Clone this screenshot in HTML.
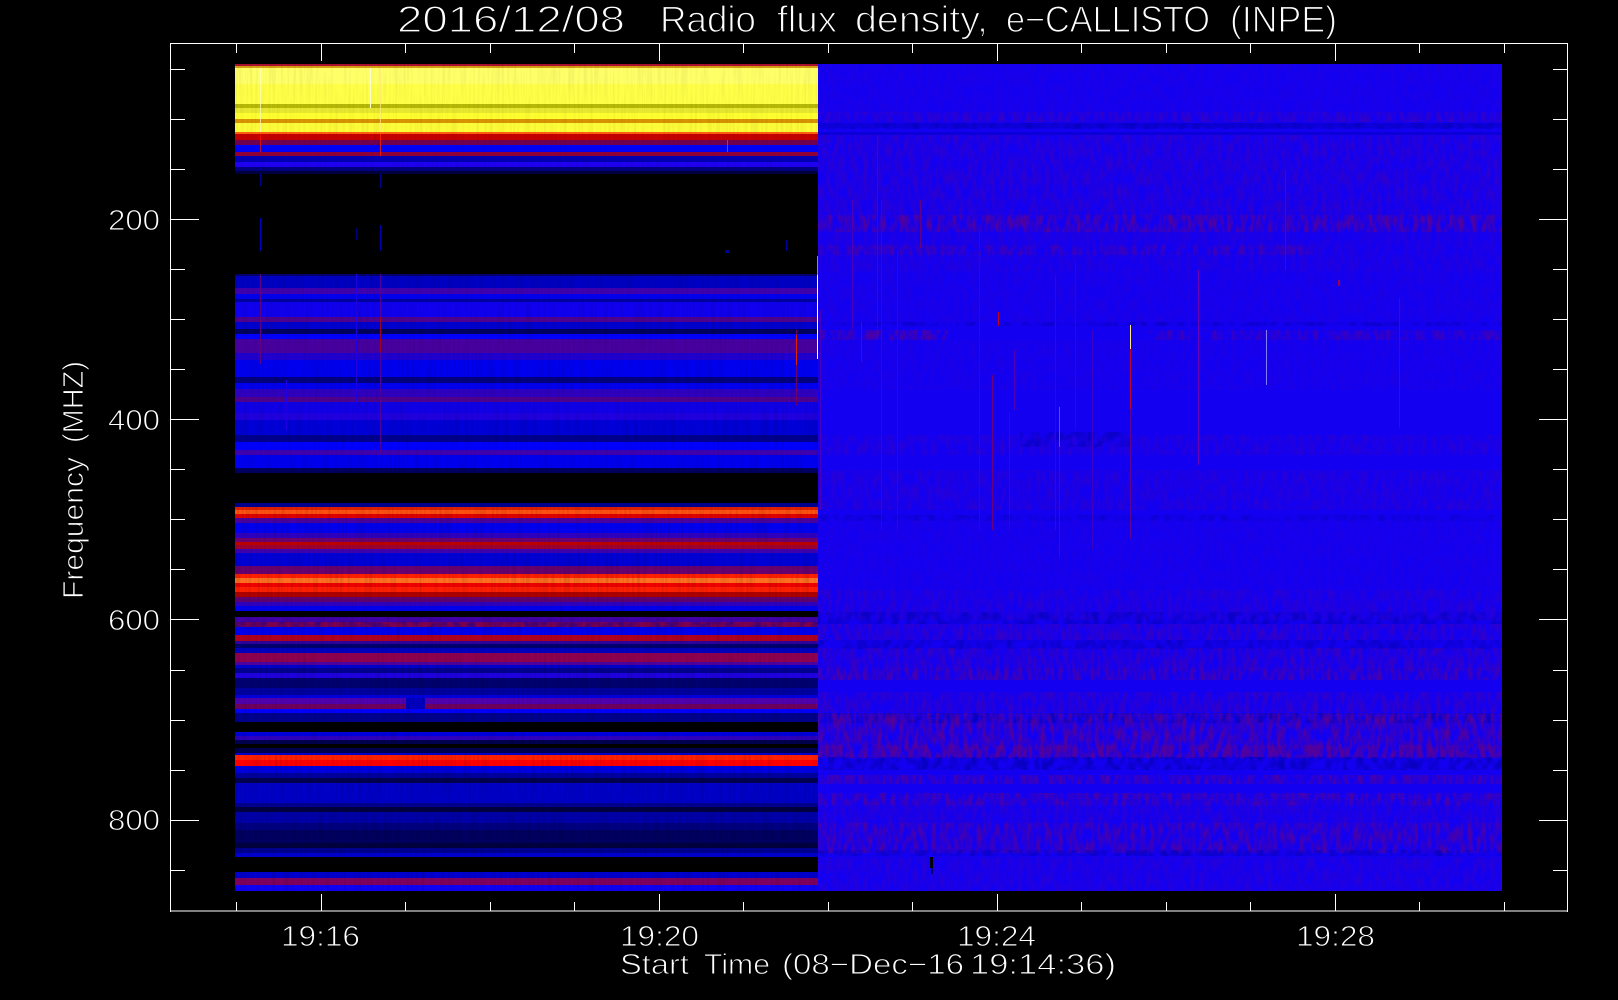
<!DOCTYPE html>
<html><head><meta charset="utf-8"><title>e-CALLISTO</title>
<style>
html,body{margin:0;padding:0;background:#000;width:1618px;height:1000px;overflow:hidden}
svg{display:block}
.b rect,.g rect{shape-rendering:crispEdges}
text{font-family:"Liberation Sans",sans-serif;fill:#fff;stroke:#000;white-space:pre}
.t{font-size:37px;stroke-width:1.2px}
.l{font-size:29px;stroke-width:.9px}
</style></head><body>
<svg xmlns="http://www.w3.org/2000/svg" width="1618" height="1000" viewBox="0 0 1618 1000">
<defs>
<filter id="p" x="0" y="0" width="100%" height="100%" color-interpolation-filters="sRGB">
<feTurbulence type="fractalNoise" baseFrequency=".22 .07" numOctaves="2" seed="4"/>
<feColorMatrix values="0 0 0 0 .5 0 0 0 0 0 0 0 0 0 .38 2.4 0 0 0 -.85"/>
<feComposite in2="SourceAlpha" operator="in"/>
</filter>
<filter id="d" x="0" y="0" width="100%" height="100%" color-interpolation-filters="sRGB">
<feTurbulence type="fractalNoise" baseFrequency=".14 .1" numOctaves="2" seed="9"/>
<feColorMatrix values="0 0 0 0 0 0 0 0 0 0 0 0 0 0 .62 2.6 0 0 0 -.95"/>
<feComposite in2="SourceAlpha" operator="in"/>
</filter>
<filter id="s" x="0" y="0" width="100%" height="100%" color-interpolation-filters="sRGB">
<feTurbulence type="fractalNoise" baseFrequency=".45 .02" numOctaves="2" seed="2"/>
<feColorMatrix values="0 0 0 0 0 0 0 0 0 0 0 0 0 0 0 2.2 0 0 0 -.85"/>
<feComposite in2="SourceAlpha" operator="in"/>
</filter>
</defs>
<rect width="1618" height="1000" fill="#000"/>

<!-- left bands -->
<g class="b">
<rect x="235" y="64" width="583" height="2" fill="#a81030"/>
<rect x="235" y="66" width="583" height="2" fill="#d8a010"/>
<rect x="235" y="68" width="583" height="16" fill="#ffff68"/>
<rect x="235" y="84" width="583" height="20" fill="#ffff48"/>
<rect x="235" y="104" width="583" height="4" fill="#b8b808"/>
<rect x="235" y="108" width="583" height="5" fill="#e8e830"/>
<rect x="235" y="113" width="583" height="6" fill="#ffff30"/>
<rect x="235" y="119" width="583" height="4" fill="#d89400"/>
<rect x="235" y="123" width="583" height="9" fill="#fcfc38"/>
<rect x="235" y="132" width="583" height="2" fill="#ff6010"/>
<rect x="235" y="134" width="583" height="6" fill="#c40000"/>
<rect x="235" y="140" width="583" height="5" fill="#700050"/>
<rect x="235" y="145" width="583" height="7" fill="#0000f8"/>
<rect x="235" y="152" width="583" height="4" fill="#900038"/>
<rect x="235" y="156" width="583" height="6" fill="#0000b4"/>
<rect x="235" y="162" width="583" height="5" fill="#2000f0"/>
<rect x="235" y="167" width="583" height="4" fill="#000080"/>
<rect x="235" y="171" width="583" height="3" fill="#000040"/>
<rect x="235" y="274" width="583" height="2" fill="#000070"/>
<rect x="235" y="276" width="583" height="12" fill="#0000c4"/>
<rect x="235" y="288" width="583" height="6" fill="#4000b0"/>
<rect x="235" y="294" width="583" height="5" fill="#0000f0"/>
<rect x="235" y="299" width="583" height="3" fill="#0000a0"/>
<rect x="235" y="302" width="583" height="15" fill="#1000f0"/>
<rect x="235" y="317" width="583" height="5" fill="#500090"/>
<rect x="235" y="322" width="583" height="7" fill="#0000d0"/>
<rect x="235" y="329" width="583" height="5" fill="#000060"/>
<rect x="235" y="334" width="583" height="5" fill="#0000ff"/>
<rect x="235" y="339" width="583" height="14" fill="#4800a0"/>
<rect x="235" y="353" width="583" height="7" fill="#2000d0"/>
<rect x="235" y="360" width="583" height="17" fill="#0000f0"/>
<rect x="235" y="377" width="583" height="6" fill="#000080"/>
<rect x="235" y="383" width="583" height="6" fill="#0000f0"/>
<rect x="235" y="389" width="583" height="8" fill="#3000c0"/>
<rect x="235" y="397" width="583" height="5" fill="#500090"/>
<rect x="235" y="402" width="583" height="11" fill="#1000e8"/>
<rect x="235" y="413" width="583" height="7" fill="#2000e0"/>
<rect x="235" y="420" width="583" height="15" fill="#0000d8"/>
<rect x="235" y="435" width="583" height="7" fill="#000090"/>
<rect x="235" y="442" width="583" height="8" fill="#0000ff"/>
<rect x="235" y="450" width="583" height="5" fill="#4000b0"/>
<rect x="235" y="455" width="583" height="13" fill="#0000f0"/>
<rect x="235" y="468" width="583" height="5" fill="#000060"/>
<rect x="235" y="503" width="583" height="4" fill="#000090"/>
<rect x="235" y="507" width="583" height="3" fill="#e02000"/>
<rect x="235" y="510" width="583" height="4" fill="#ff5010"/>
<rect x="235" y="514" width="583" height="4" fill="#e00000"/>
<rect x="235" y="518" width="583" height="5" fill="#4a00a0"/>
<rect x="235" y="523" width="583" height="10" fill="#0000f0"/>
<rect x="235" y="533" width="583" height="5" fill="#3000c0"/>
<rect x="235" y="538" width="583" height="4" fill="#700070"/>
<rect x="235" y="542" width="583" height="3" fill="#c00000"/>
<rect x="235" y="545" width="583" height="4" fill="#a00030"/>
<rect x="235" y="549" width="583" height="4" fill="#4000b0"/>
<rect x="235" y="553" width="583" height="13" fill="#0000d8"/>
<rect x="235" y="566" width="583" height="8" fill="#680070"/>
<rect x="235" y="574" width="583" height="4" fill="#ff2000"/>
<rect x="235" y="578" width="583" height="5" fill="#ff7020"/>
<rect x="235" y="583" width="583" height="4" fill="#f00000"/>
<rect x="235" y="587" width="583" height="5" fill="#ff2000"/>
<rect x="235" y="592" width="583" height="5" fill="#b00000"/>
<rect x="235" y="597" width="583" height="5" fill="#600070"/>
<rect x="235" y="602" width="583" height="4" fill="#3000c0"/>
<rect x="235" y="606" width="583" height="5" fill="#0000f0"/>
<rect x="235" y="617" width="583" height="5" fill="#4000a8"/>
<rect x="235" y="622" width="583" height="5" fill="#800050"/>
<rect x="235" y="627" width="583" height="8" fill="#0000f0"/>
<rect x="235" y="635" width="583" height="6" fill="#b00020"/>
<rect x="235" y="641" width="583" height="3" fill="#3000a0"/>
<rect x="235" y="644" width="583" height="4" fill="#000070"/>
<rect x="235" y="648" width="583" height="5" fill="#0000c0"/>
<rect x="235" y="653" width="583" height="9" fill="#900050"/>
<rect x="235" y="662" width="583" height="3" fill="#5000a0"/>
<rect x="235" y="665" width="583" height="3" fill="#0000d0"/>
<rect x="235" y="668" width="583" height="5" fill="#000090"/>
<rect x="235" y="673" width="583" height="5" fill="#2000e0"/>
<rect x="235" y="678" width="583" height="10" fill="#000070"/>
<rect x="235" y="688" width="583" height="7" fill="#0000a0"/>
<rect x="235" y="695" width="583" height="3" fill="#0000e0"/>
<rect x="235" y="698" width="583" height="6" fill="#5000b0"/>
<rect x="235" y="704" width="583" height="5" fill="#700060"/>
<rect x="235" y="709" width="583" height="4" fill="#0000ff"/>
<rect x="235" y="713" width="583" height="9" fill="#000090"/>
<rect x="235" y="732" width="583" height="4" fill="#0000e0"/>
<rect x="235" y="736" width="583" height="4" fill="#3000c0"/>
<rect x="235" y="740" width="583" height="4" fill="#000050"/>
<rect x="235" y="748" width="583" height="5" fill="#000050"/>
<rect x="235" y="753" width="583" height="2" fill="#0000d0"/>
<rect x="235" y="755" width="583" height="5" fill="#ff2000"/>
<rect x="235" y="760" width="583" height="6" fill="#ff0000"/>
<rect x="235" y="766" width="583" height="7" fill="#0000e0"/>
<rect x="235" y="773" width="583" height="5" fill="#0000a0"/>
<rect x="235" y="778" width="583" height="5" fill="#000050"/>
<rect x="235" y="783" width="583" height="20" fill="#0000c8"/>
<rect x="235" y="803" width="583" height="4" fill="#000090"/>
<rect x="235" y="807" width="583" height="5" fill="#000040"/>
<rect x="235" y="812" width="583" height="11" fill="#0000a8"/>
<rect x="235" y="823" width="583" height="7" fill="#000080"/>
<rect x="235" y="830" width="583" height="13" fill="#000060"/>
<rect x="235" y="843" width="583" height="5" fill="#000040"/>
<rect x="235" y="848" width="583" height="5" fill="#000090"/>
<rect x="235" y="853" width="583" height="4" fill="#0000d0"/>
<rect x="235" y="872" width="583" height="6" fill="#0000d0"/>
<rect x="235" y="878" width="583" height="7" fill="#800060"/>
<rect x="235" y="885" width="583" height="6" fill="#1000f8"/>
<rect x="406" y="698" width="19" height="11" fill="#0000c0"/>
</g>
<!-- left texture -->
<g>
<rect x="235" y="64" width="583" height="110" fill="#000" filter="url(#s)" opacity=".05"/>
<rect x="235" y="274" width="583" height="199" fill="#000" filter="url(#s)" opacity=".1"/>
<rect x="235" y="503" width="583" height="388" fill="#000" filter="url(#s)" opacity=".12"/>
<rect x="235" y="622" width="583" height="5" fill="#fff" filter="url(#d)" opacity=".5"/>
<rect x="235" y="104" width="583" height="9" fill="#ffff40" filter="url(#d)" opacity="0"/>
</g>
<g class="g">
<rect x="260" y="68" width="1" height="64" fill="#ffffc0" opacity=".7"/>
<rect x="260" y="134" width="1" height="18" fill="#ff1000" opacity=".7"/>
<rect x="380" y="68" width="1" height="64" fill="#ffe880" opacity=".7"/>
<rect x="380" y="134" width="1" height="22" fill="#ff2000" opacity=".8"/>
<rect x="370" y="68" width="1" height="40" fill="#ffffd0"/>
<rect x="727" y="140" width="1" height="12" fill="#ff2000"/>
<rect x="260" y="174" width="1" height="12" fill="#000090"/>
<rect x="380" y="174" width="1" height="14" fill="#000090"/>
<rect x="260" y="218" width="1" height="33" fill="#0000c0"/>
<rect x="380" y="225" width="1" height="26" fill="#0000b0"/>
<rect x="356" y="228" width="1" height="12" fill="#000080"/>
<rect x="725" y="250" width="4" height="3" fill="#000090"/>
<rect x="786" y="240" width="1" height="11" fill="#0000a0"/>
<rect x="260" y="274" width="1" height="90" fill="#600080"/>
<rect x="356" y="274" width="1" height="130" fill="#2000e0"/>
<rect x="380" y="274" width="1" height="180" fill="#500098"/>
<rect x="380" y="317" width="1" height="35" fill="#a00020"/>
<rect x="286" y="380" width="1" height="50" fill="#2000e0"/>
<rect x="796" y="330" width="1" height="75" fill="#700060"/>
<rect x="796" y="335" width="1" height="30" fill="#e02000"/>
</g>

<!-- right panel -->
<rect x="818" y="64" width="684" height="827" fill="#1400f0" class="g"/>
<g opacity=".6">
<rect x="818" y="64" width="684" height="48" fill="#fff" filter="url(#p)" opacity=".12"/>
<rect x="818" y="112" width="684" height="10" fill="#fff" filter="url(#p)" opacity=".5"/>
<rect x="818" y="123" width="684" height="6" fill="#fff" filter="url(#d)"/>
<rect x="818" y="123" width="684" height="5" fill="#0000b0" opacity=".5"/>
<rect x="818" y="132" width="684" height="3" fill="#0000b0" opacity=".6"/>
<rect x="818" y="135" width="684" height="80" fill="#fff" filter="url(#p)" opacity=".4"/>
<rect x="818" y="215" width="684" height="17" fill="#fff" filter="url(#p)"/>
<rect x="818" y="232" width="684" height="40" fill="#fff" filter="url(#p)" opacity=".25"/>
<rect x="818" y="245" width="500" height="10" fill="#fff" filter="url(#p)" opacity=".55"/>
<rect x="818" y="272" width="684" height="50" fill="#fff" filter="url(#p)" opacity=".15"/>
<rect x="818" y="322" width="684" height="4" fill="#fff" filter="url(#d)" opacity=".7"/>
<rect x="818" y="330" width="130" height="10" fill="#fff" filter="url(#p)" opacity=".9"/>
<rect x="1150" y="330" width="352" height="10" fill="#fff" filter="url(#p)" opacity=".6"/>
<rect x="818" y="340" width="684" height="50" fill="#fff" filter="url(#p)" opacity=".12"/>
<rect x="818" y="435" width="684" height="20" fill="#fff" filter="url(#p)" opacity=".3"/>
<rect x="1020" y="432" width="110" height="15" fill="#fff" filter="url(#d)" opacity=".8"/>
<rect x="818" y="470" width="684" height="40" fill="#fff" filter="url(#p)" opacity=".3"/>
<rect x="818" y="515" width="684" height="6" fill="#fff" filter="url(#d)" opacity=".6"/>
<rect x="818" y="520" width="684" height="70" fill="#fff" filter="url(#p)" opacity=".12"/>
<rect x="818" y="590" width="684" height="30" fill="#fff" filter="url(#p)" opacity=".35"/>
<rect x="818" y="612" width="684" height="12" fill="#fff" filter="url(#d)" opacity=".8"/>
<rect x="818" y="624" width="684" height="16" fill="#fff" filter="url(#p)" opacity=".5"/>
<rect x="818" y="640" width="684" height="9" fill="#fff" filter="url(#d)" opacity=".8"/>
<rect x="818" y="648" width="684" height="20" fill="#fff" filter="url(#p)" opacity=".55"/>
<rect x="818" y="668" width="684" height="12" fill="#fff" filter="url(#p)" opacity=".85"/>
<rect x="818" y="692" width="684" height="20" fill="#fff" filter="url(#p)" opacity=".5"/>
<rect x="818" y="713" width="684" height="10" fill="#fff" filter="url(#d)"/>
<rect x="818" y="713" width="684" height="45" fill="#fff" filter="url(#p)"/>
<rect x="818" y="745" width="684" height="13" fill="#fff" filter="url(#p)"/>
<rect x="818" y="757" width="684" height="13" fill="#fff" filter="url(#d)"/>
<rect x="818" y="775" width="684" height="9" fill="#fff" filter="url(#p)" opacity=".8"/>
<rect x="818" y="793" width="684" height="12" fill="#fff" filter="url(#p)" opacity=".85"/>
<rect x="818" y="805" width="684" height="18" fill="#fff" filter="url(#p)" opacity=".35"/>
<rect x="818" y="823" width="684" height="30" fill="#fff" filter="url(#p)" opacity=".85"/>
<rect x="818" y="850" width="684" height="6" fill="#fff" filter="url(#d)" opacity=".8"/>
<rect x="818" y="857" width="684" height="34" fill="#fff" filter="url(#p)" opacity=".3"/>
</g>
<g class="g">
<rect x="817" y="256" width="1.2" height="19" fill="#d08020"/>
<rect x="817" y="275" width="1.2" height="84" fill="#ffffff"/>
<g opacity=".7">
<rect x="820" y="310" width="1" height="200" fill="#6000a8"/>
<rect x="852" y="200" width="1" height="130" fill="#6000a8"/>
<rect x="861" y="322" width="1" height="40" fill="#a80030"/>
<rect x="877" y="135" width="1" height="205" fill="#6000a8"/>
<rect x="881" y="200" width="1" height="330" fill="#5800b0"/>
<rect x="897" y="250" width="1" height="280" fill="#5000b0"/>
<rect x="920" y="200" width="1" height="48" fill="#800060"/>
<rect x="979" y="230" width="1" height="300" fill="#5000b0"/>
<rect x="992" y="375" width="1" height="155" fill="#900050"/>
<rect x="1009" y="412" width="1" height="118" fill="#5800a8"/>
<rect x="1014" y="350" width="1" height="60" fill="#7000a0"/>
<rect x="1055" y="275" width="1" height="255" fill="#6000a8"/>
<rect x="1059" y="447" width="1" height="110" fill="#800070"/>
<rect x="1075" y="260" width="1" height="170" fill="#5000b0"/>
<rect x="1092" y="330" width="1" height="220" fill="#5000b0"/>
<rect x="1130" y="409" width="1" height="130" fill="#800070"/>
<rect x="1198" y="270" width="1" height="195" fill="#9000a0"/>
<rect x="1285" y="170" width="1" height="100" fill="#800070"/>
<rect x="1399" y="298" width="1" height="130" fill="#7000a0"/>
</g>
<rect x="998" y="312" width="1" height="14" fill="#c00020"/>
<rect x="1059" y="407" width="1" height="40" fill="#ff2020"/>
<rect x="1130" y="325" width="1" height="24" fill="#ffe880"/>
<rect x="1130" y="349" width="1" height="60" fill="#c00030"/>
<rect x="1266" y="330" width="1" height="55" fill="#8080ff"/>
<rect x="1338" y="280" width="2" height="6" fill="#a00040"/>
<rect x="930" y="857" width="3" height="11" fill="#000"/>
<rect x="931" y="868" width="2" height="6" fill="#000070"/>
</g>

<!-- frame and ticks -->
<g fill="#fff" class="g">
<rect x="170" y="43" width="1398" height="1.2"/><rect x="170" y="910.5" width="1398" height="1.2"/>
<rect x="170" y="43" width="1.2" height="869"/><rect x="1567" y="43" width="1.2" height="869"/>
<!-- top ticks -->
<rect x="236" y="43" width="1" height="10"/><rect x="321" y="43" width="1" height="18"/><rect x="405" y="43" width="1" height="10"/><rect x="490" y="43" width="1" height="10"/><rect x="574" y="43" width="1" height="10"/><rect x="659" y="43" width="1" height="18"/><rect x="743" y="43" width="1" height="10"/><rect x="828" y="43" width="1" height="10"/><rect x="912" y="43" width="1" height="10"/><rect x="997" y="43" width="1" height="18"/><rect x="1081" y="43" width="1" height="10"/><rect x="1166" y="43" width="1" height="10"/><rect x="1250" y="43" width="1" height="10"/><rect x="1335" y="43" width="1" height="18"/><rect x="1419" y="43" width="1" height="10"/><rect x="1504" y="43" width="1" height="10"/>
<!-- bottom ticks -->
<rect x="236" y="902" width="1" height="9"/><rect x="321" y="894" width="1" height="17"/><rect x="405" y="902" width="1" height="9"/><rect x="490" y="902" width="1" height="9"/><rect x="574" y="902" width="1" height="9"/><rect x="659" y="894" width="1" height="17"/><rect x="743" y="902" width="1" height="9"/><rect x="828" y="902" width="1" height="9"/><rect x="912" y="902" width="1" height="9"/><rect x="997" y="894" width="1" height="17"/><rect x="1081" y="902" width="1" height="9"/><rect x="1166" y="902" width="1" height="9"/><rect x="1250" y="902" width="1" height="9"/><rect x="1335" y="894" width="1" height="17"/><rect x="1419" y="902" width="1" height="9"/><rect x="1504" y="902" width="1" height="9"/>
<!-- left ticks -->
<rect x="170" y="69" width="15" height="1"/><rect x="170" y="119" width="15" height="1"/><rect x="170" y="169" width="15" height="1"/><rect x="170" y="219" width="29" height="1"/><rect x="170" y="269" width="15" height="1"/><rect x="170" y="319" width="15" height="1"/><rect x="170" y="369" width="15" height="1"/><rect x="170" y="419" width="29" height="1"/><rect x="170" y="469" width="15" height="1"/><rect x="170" y="519" width="15" height="1"/><rect x="170" y="569" width="15" height="1"/><rect x="170" y="619" width="29" height="1"/><rect x="170" y="670" width="15" height="1"/><rect x="170" y="720" width="15" height="1"/><rect x="170" y="770" width="15" height="1"/><rect x="170" y="820" width="29" height="1"/><rect x="170" y="870" width="15" height="1"/>
<!-- right ticks -->
<rect x="1553" y="69" width="15" height="1"/><rect x="1553" y="119" width="15" height="1"/><rect x="1553" y="169" width="15" height="1"/><rect x="1539" y="219" width="29" height="1"/><rect x="1553" y="269" width="15" height="1"/><rect x="1553" y="319" width="15" height="1"/><rect x="1553" y="369" width="15" height="1"/><rect x="1539" y="419" width="29" height="1"/><rect x="1553" y="469" width="15" height="1"/><rect x="1553" y="519" width="15" height="1"/><rect x="1553" y="569" width="15" height="1"/><rect x="1539" y="619" width="29" height="1"/><rect x="1553" y="670" width="15" height="1"/><rect x="1553" y="720" width="15" height="1"/><rect x="1553" y="770" width="15" height="1"/><rect x="1539" y="820" width="29" height="1"/><rect x="1553" y="870" width="15" height="1"/>
</g>

<!-- title -->
<g class="t">
<text x="397" y="32" textLength="228" lengthAdjust="spacingAndGlyphs">2016/12/08</text>
<text x="660" y="32" textLength="96" lengthAdjust="spacingAndGlyphs">Radio</text>
<text x="777" y="32" textLength="60" lengthAdjust="spacingAndGlyphs">flux</text>
<text x="855" y="32" textLength="133" lengthAdjust="spacingAndGlyphs">density,</text>
<text x="1006" y="32" textLength="204" lengthAdjust="spacingAndGlyphs">e−CALLISTO</text>
<text x="1230" y="32" textLength="107" lengthAdjust="spacingAndGlyphs">(INPE)</text>
</g>
<!-- axis labels -->
<g class="l">
<text x="108" y="230" textLength="52" lengthAdjust="spacingAndGlyphs">200</text>
<text x="108" y="430" textLength="52" lengthAdjust="spacingAndGlyphs">400</text>
<text x="108" y="630" textLength="52" lengthAdjust="spacingAndGlyphs">600</text>
<text x="108" y="830" textLength="52" lengthAdjust="spacingAndGlyphs">800</text>
<text x="281" y="946" textLength="79" lengthAdjust="spacingAndGlyphs">19:16</text>
<text x="620" y="946" textLength="79" lengthAdjust="spacingAndGlyphs">19:20</text>
<text x="957" y="946" textLength="79" lengthAdjust="spacingAndGlyphs">19:24</text>
<text x="1296" y="946" textLength="79" lengthAdjust="spacingAndGlyphs">19:28</text>
<text x="620" y="974" textLength="69" lengthAdjust="spacingAndGlyphs">Start</text>
<text x="704" y="974" textLength="66" lengthAdjust="spacingAndGlyphs">Time</text>
<text x="782" y="974" textLength="182" lengthAdjust="spacingAndGlyphs">(08−Dec−16</text>
<text x="970" y="974" textLength="146" lengthAdjust="spacingAndGlyphs">19:14:36)</text>
<text transform="translate(83 599) rotate(-90)" textLength="142" lengthAdjust="spacingAndGlyphs">Frequency</text>
<text transform="translate(83 443) rotate(-90)" textLength="82" lengthAdjust="spacingAndGlyphs">(MHZ)</text>
</g>
</svg>
</body></html>
